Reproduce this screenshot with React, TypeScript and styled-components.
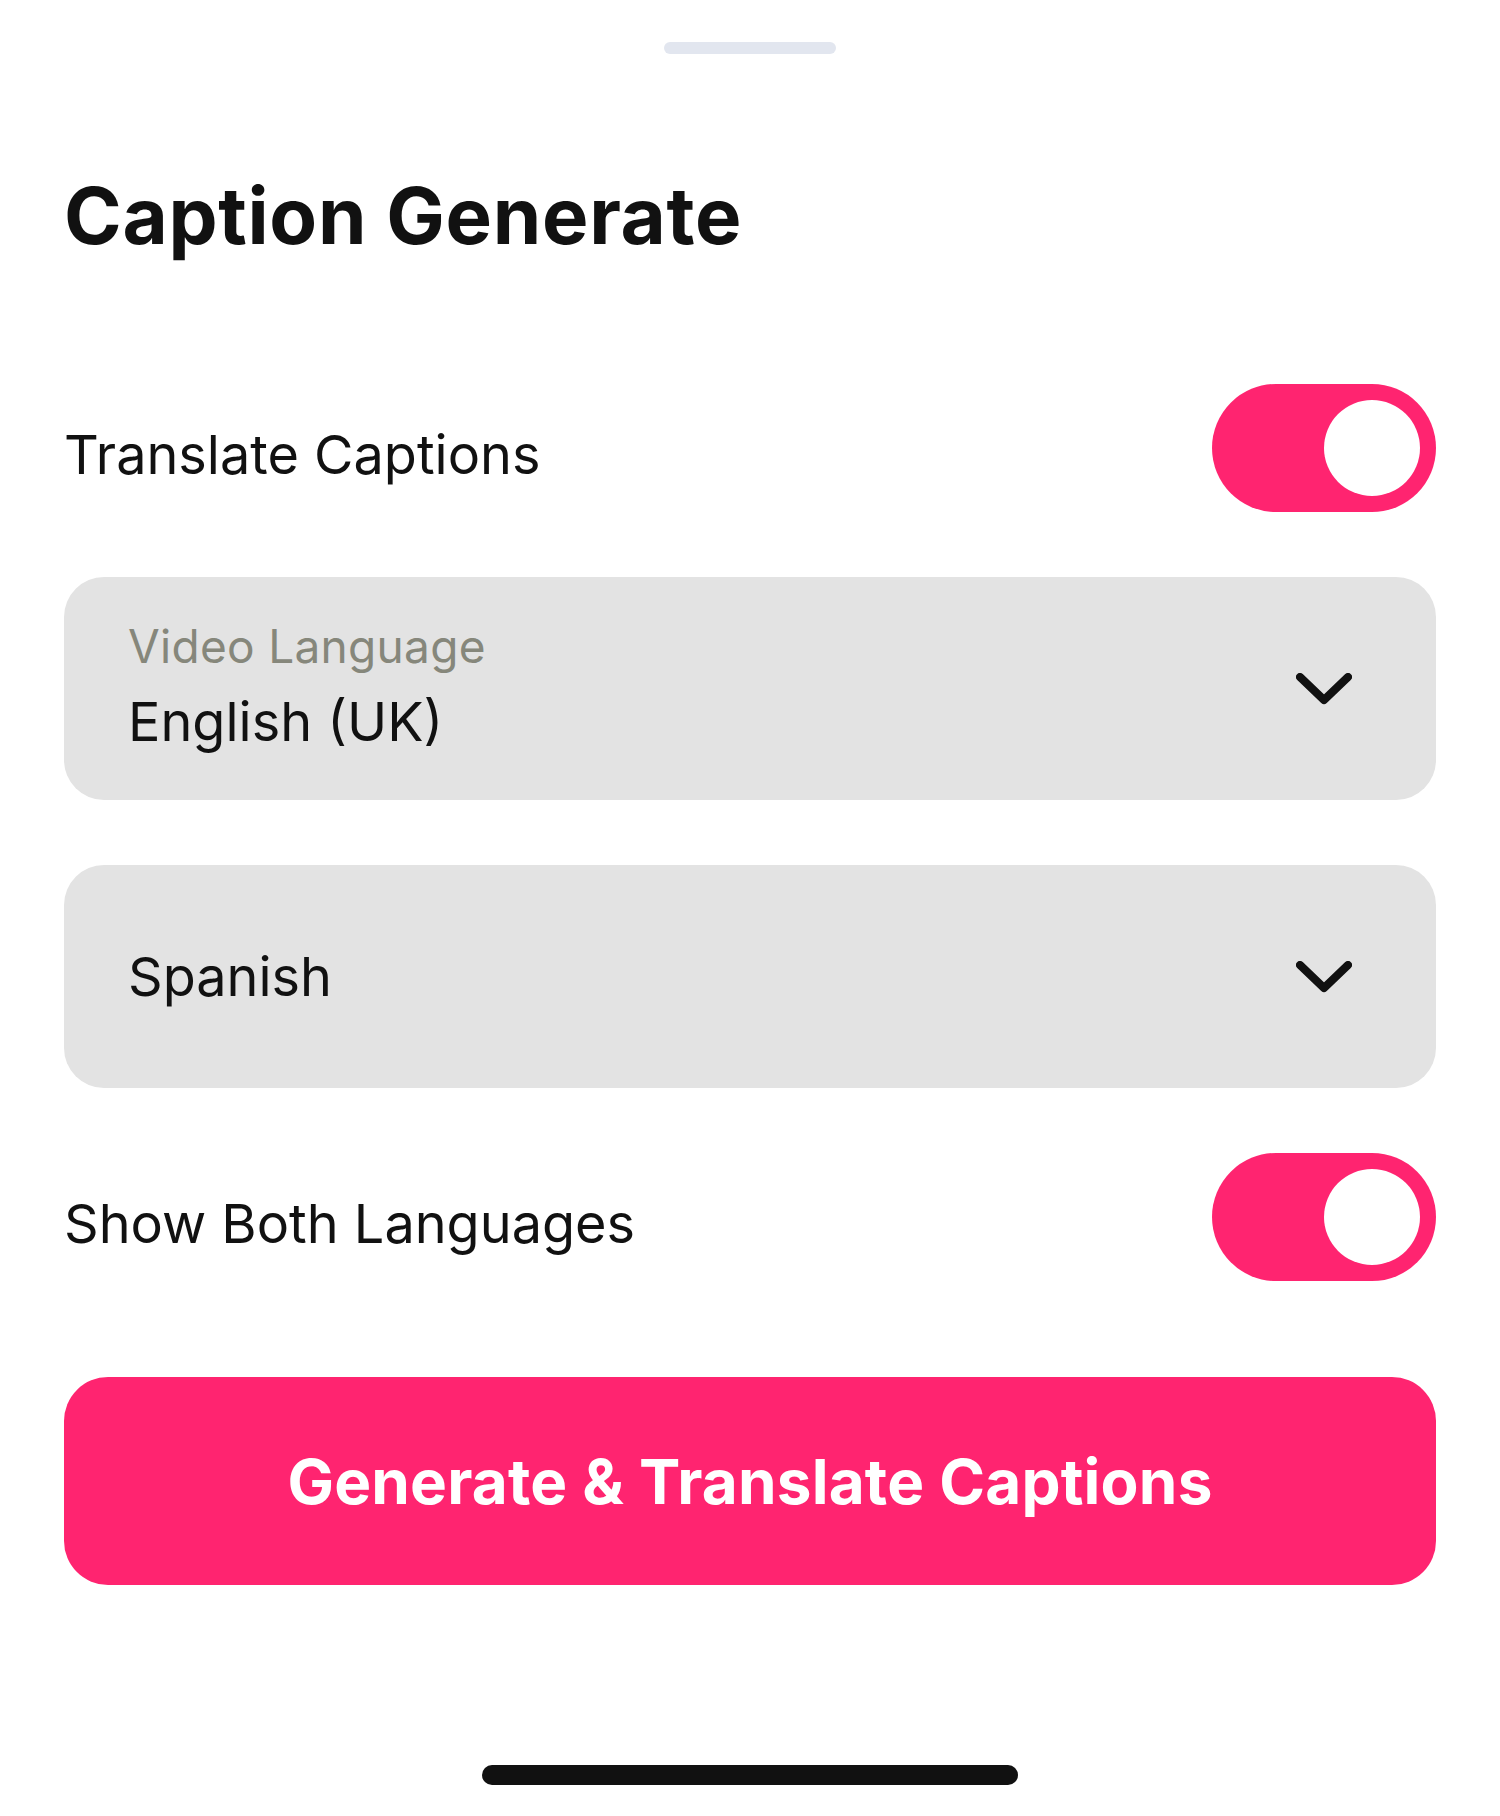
import React, { FC, useState } from 'react'
import styled, { createGlobalStyle } from 'styled-components'

const GlobalStyle = createGlobalStyle`
  html, body {
    margin: 0;
    padding: 0;
    background: #ffffff;
  }
  body {
    font-family: Inter, 'Noto Sans', sans-serif;
    color: #111111;
    -webkit-font-smoothing: antialiased;
  }
`

const pink = '#ff2470'

const Sheet = styled.div`
  width: 1500px;
  height: 1816px;
  box-sizing: border-box;
  padding: 0 64px;
  display: flex;
  flex-direction: column;
  background: #ffffff;
`

const Grabber = styled.div`
  align-self: center;
  width: 172px;
  height: 12px;
  margin-top: 42px;
  border-radius: 6px;
  background: #e2e6ef;
`

const Title = styled.h1`
  margin: 123px 0 0 0;
  font-size: 78px;
  line-height: 78px;
  font-weight: 700;
  letter-spacing: 0.7px;
  color: #111111;
`

const Form = styled.div`
  display: flex;
  flex-direction: column;
  gap: 65px;
  margin-top: 129px;
`

const SwitchRow = styled.div`
  display: flex;
  align-items: center;
  justify-content: space-between;
  height: 128px;
`

const RowLabel = styled.span`
  font-size: 54px;
  line-height: 55px;
  padding-top: 12px;
  font-weight: 400;
  color: #111111;
`

const Track = styled.button<{ $on: boolean }>`
  width: 224px;
  height: 128px;
  padding: 16px;
  border: none;
  border-radius: 64px;
  display: flex;
  justify-content: ${({ $on }) => ($on ? 'flex-end' : 'flex-start')};
  background: ${({ $on }) => ($on ? pink : '#d4d4d4')};
  cursor: pointer;
`

const Knob = styled.span`
  width: 96px;
  height: 96px;
  border-radius: 50%;
  background: #ffffff;
`

const Field = styled.div`
  display: flex;
  align-items: center;
  justify-content: space-between;
  height: 223px;
  box-sizing: border-box;
  padding: 0 84px 0 64px;
  border-radius: 40px;
  background: #e3e3e3;
  cursor: pointer;
`

const FieldText = styled.div<{ $labelled: boolean }>`
  display: flex;
  flex-direction: column;
  align-self: ${({ $labelled }) => ($labelled ? 'flex-start' : 'center')};
  padding-top: ${({ $labelled }) => ($labelled ? '41px' : '0')};
`

const FieldLabel = styled.span`
  font-size: 46px;
  line-height: 56px;
  letter-spacing: 0.3px;
  color: #86877b;
`

const FieldValue = styled.span<{ $labelled: boolean }>`
  font-size: 54px;
  line-height: 66px;
  margin-top: ${({ $labelled }) => ($labelled ? '15px' : '0')};
  color: #111111;
`

const PrimaryButton = styled.button`
  height: 208px;
  margin-top: 96px;
  border: none;
  border-radius: 44px;
  background: ${pink};
  color: #ffffff;
  font-family: inherit;
  font-size: 62px;
  font-weight: 700;
  letter-spacing: 0.2px;
  cursor: pointer;
`

const HomeBar = styled.div`
  align-self: center;
  width: 536px;
  height: 20px;
  margin-top: 180px;
  border-radius: 10px;
  background: #111111;
`

const Chevron: FC = () => (
  <svg width="56" height="32" viewBox="0 0 56 32" fill="none">
    <path d="M4 4 L28 27 L52 4" stroke="#111111" strokeWidth="8" strokeLinecap="round" strokeLinejoin="round" />
  </svg>
)

type SwitchProps = { label: string, on: boolean, onToggle: () => void }

const SwitchField: FC<SwitchProps> = ({ label, on, onToggle }) => (
  <SwitchRow>
    <RowLabel>{label}</RowLabel>
    <Track $on={on} onClick={onToggle} aria-pressed={on}>
      <Knob />
    </Track>
  </SwitchRow>
)

type SelectProps = { label?: string, value: string }

const SelectField: FC<SelectProps> = ({ label, value }) => (
  <Field>
    <FieldText $labelled={!!label}>
      {label && <FieldLabel>{label}</FieldLabel>}
      <FieldValue $labelled={!!label}>{value}</FieldValue>
    </FieldText>
    <Chevron />
  </Field>
)

const App: FC = () => {
  const [translate, setTranslate] = useState(true)
  const [both, setBoth] = useState(true)

  return (
    <>
      <GlobalStyle />
      <Sheet>
        <Grabber />
        <Title>Caption Generate</Title>
        <Form>
          <SwitchField label="Translate Captions" on={translate} onToggle={() => setTranslate(!translate)} />
          <SelectField label="Video Language" value="English (UK)" />
          <SelectField value="Spanish" />
          <SwitchField label="Show Both Languages" on={both} onToggle={() => setBoth(!both)} />
        </Form>
        <PrimaryButton>Generate &amp; Translate Captions</PrimaryButton>
        <HomeBar />
      </Sheet>
    </>
  )
}

export default App
